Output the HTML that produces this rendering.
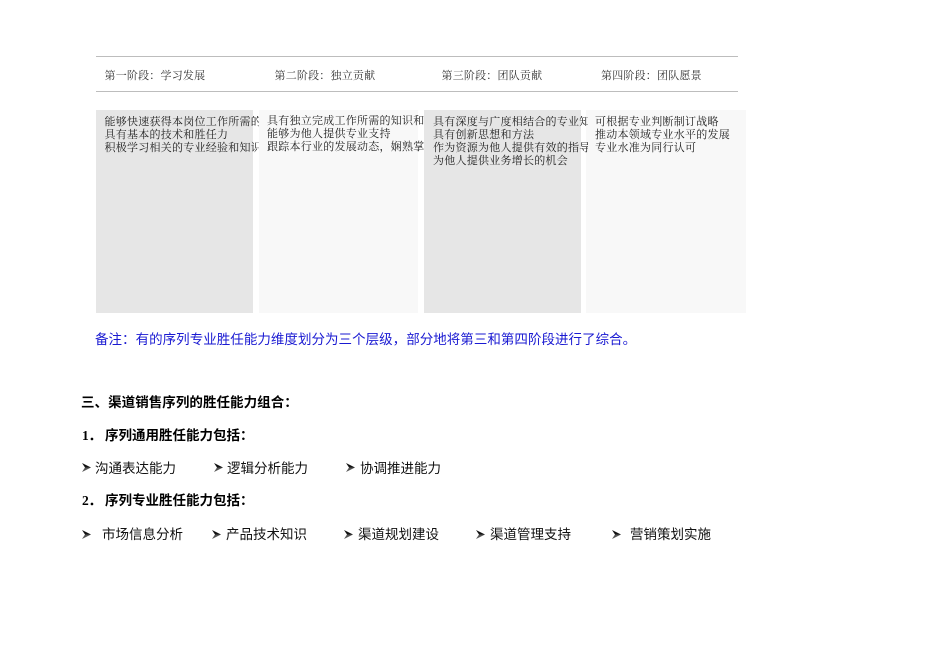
<!DOCTYPE html>
<html lang="zh">
<head>
<meta charset="utf-8">
<style>
html,body{margin:0;padding:0;background:#fff;width:950px;height:672px;overflow:hidden}
.a{position:absolute;white-space:nowrap}
.s{font-family:"Liberation Serif","Noto Serif CJK SC",serif;font-size:11px;letter-spacing:.25px;line-height:13px;color:#222}
.h{font-family:"Liberation Serif","Noto Serif CJK SC",serif;font-size:11px;letter-spacing:.2px;line-height:13px;color:#333}
.m{font-family:"Liberation Sans","Noto Sans CJK SC",sans-serif;font-size:13.5px;line-height:18px;color:#111}
.b{font-weight:bold;color:#000}
.r{position:absolute}
.c{overflow:hidden}
svg{position:absolute}
</style>
</head>
<body>
<div class="r" style="left:96px;top:56px;width:642px;height:1px;background:#bdbdbd"></div>
<div class="r" style="left:96px;top:91px;width:642px;height:1px;background:#bdbdbd"></div>
<div class="a h" style="left:104.5px;top:70px">第一阶段：学习发展</div>
<div class="a h" style="left:274.5px;top:70px">第二阶段：独立贡献</div>
<div class="a h" style="left:441.5px;top:70px">第三阶段：团队贡献</div>
<div class="a h" style="left:601px;top:70px">第四阶段：团队愿景</div>

<div class="r" style="left:96px;top:110px;width:157px;height:203px;background:#e6e6e6"></div>
<div class="r" style="left:259px;top:110px;width:159px;height:203px;background:#f8f8f8"></div>
<div class="r" style="left:424px;top:110px;width:157px;height:203px;background:#e6e6e6"></div>
<div class="r" style="left:586px;top:110px;width:160px;height:203px;background:#f8f8f8"></div>

<div class="a s c" style="left:104.5px;top:116px;width:154.5px">能够快速获得本岗位工作所需的知识<br>具有基本的技术和胜任力<br>积极学习相关的专业经验和知识</div>
<div class="a s c" style="left:267px;top:115px;width:157px">具有独立完成工作所需的知识和技能<br>能够为他人提供专业支持<br>跟踪本行业的发展动态，娴熟掌握</div>
<div class="a s c" style="left:433px;top:116px;width:155px">具有深度与广度相结合的专业知识<br>具有创新思想和方法<br>作为资源为他人提供有效的指导<br>为他人提供业务增长的机会</div>
<div class="a s" style="left:595px;top:116px">可根据专业判断制订战略<br>推动本领域专业水平的发展<br>专业水准为同行认可</div>

<div class="a m" style="left:95px;top:331px;color:#1a1ad2;font-size:13.5px;letter-spacing:.03px">备注：有的序列专业胜任能力维度划分为三个层级，部分地将第三和第四阶段进行了综合。</div>
<div class="a m b" style="left:81px;top:394px;font-size:13.5px;letter-spacing:.05px">三、渠道销售序列的胜任能力组合：</div>
<div class="a m b" style="left:82px;top:427px;font-family:'Liberation Serif',serif">1．</div>
<div class="a m b" style="left:105px;top:427px">序列通用胜任能力包括：</div>
<div class="a m b" style="left:82px;top:492px;font-family:'Liberation Serif',serif">2．</div>
<div class="a m b" style="left:105px;top:492px">序列专业胜任能力包括：</div>

<svg style="left:81px;top:462px" width="11" height="11" viewBox="0 0 11 11"><path d="M1 1 L10 5.5 L4 5.5 Z" fill="#111"/><path d="M1 10 L10 5.5 L4 5.5 Z" fill="#555"/></svg>
<div class="a m" style="left:95px;top:460px">沟通表达能力</div>
<svg style="left:213px;top:462px" width="11" height="11" viewBox="0 0 11 11"><path d="M1 1 L10 5.5 L4 5.5 Z" fill="#111"/><path d="M1 10 L10 5.5 L4 5.5 Z" fill="#555"/></svg>
<div class="a m" style="left:227px;top:460px">逻辑分析能力</div>
<svg style="left:345px;top:462px" width="11" height="11" viewBox="0 0 11 11"><path d="M1 1 L10 5.5 L4 5.5 Z" fill="#111"/><path d="M1 10 L10 5.5 L4 5.5 Z" fill="#555"/></svg>
<div class="a m" style="left:360px;top:460px">协调推进能力</div>

<svg style="left:81px;top:529px" width="11" height="11" viewBox="0 0 11 11"><path d="M1 1 L10 5.5 L4 5.5 Z" fill="#111"/><path d="M1 10 L10 5.5 L4 5.5 Z" fill="#555"/></svg>
<div class="a m" style="left:102px;top:526px">市场信息分析</div>
<svg style="left:211px;top:529px" width="11" height="11" viewBox="0 0 11 11"><path d="M1 1 L10 5.5 L4 5.5 Z" fill="#111"/><path d="M1 10 L10 5.5 L4 5.5 Z" fill="#555"/></svg>
<div class="a m" style="left:226px;top:526px">产品技术知识</div>
<svg style="left:343px;top:529px" width="11" height="11" viewBox="0 0 11 11"><path d="M1 1 L10 5.5 L4 5.5 Z" fill="#111"/><path d="M1 10 L10 5.5 L4 5.5 Z" fill="#555"/></svg>
<div class="a m" style="left:358px;top:526px">渠道规划建设</div>
<svg style="left:475px;top:529px" width="11" height="11" viewBox="0 0 11 11"><path d="M1 1 L10 5.5 L4 5.5 Z" fill="#111"/><path d="M1 10 L10 5.5 L4 5.5 Z" fill="#555"/></svg>
<div class="a m" style="left:490px;top:526px">渠道管理支持</div>
<svg style="left:611px;top:529px" width="11" height="11" viewBox="0 0 11 11"><path d="M1 1 L10 5.5 L4 5.5 Z" fill="#111"/><path d="M1 10 L10 5.5 L4 5.5 Z" fill="#555"/></svg>
<div class="a m" style="left:630px;top:526px">营销策划实施</div>
</body>
</html>
